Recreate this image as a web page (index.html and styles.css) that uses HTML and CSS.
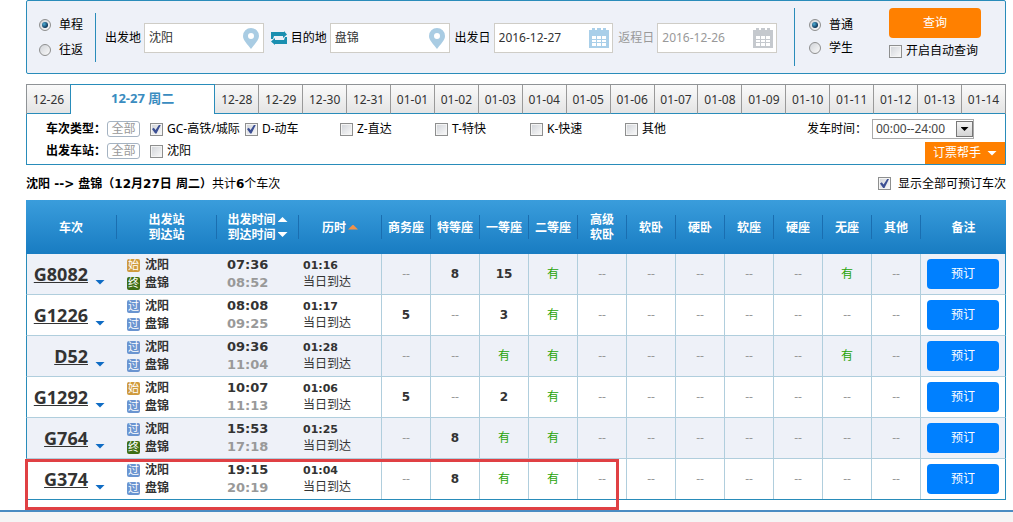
FILE: index.html
```html
<!DOCTYPE html>
<html lang="zh-CN">
<head>
  <meta charset="UTF-8" />
  <meta name="viewport" content="width=device-width, initial-scale=1" />
  <title>车票查询</title>
  <link rel="stylesheet" href="styles.css">
</head>
<body>

<svg width="0" height="0" class="sprite" aria-hidden="true">
  <symbol id="pin" viewBox="0 0 16 21">
    <path fill-rule="evenodd" d="M8 0a8 8 0 0 1 8 8c0 4.500-4.500 8-8 13C4.500 16 0 12.500 0 8a8 8 0 0 1 8-8zM8 5a3 3 0 1 0 0 6 3 3 0 0 0 0-6z"/>
  </symbol>
  <symbol id="calendar" viewBox="0 0 20 20">
    <path fill-rule="evenodd" d="M0 2h3V0h3v2h2V0h4v2h2V0h3v2h3v18H0zM3 8v3h4V8zm5 0v3h4V8zm5 0v3h4V8zM3 12v2h4v-2zm5 0v2h4v-2zm5 0v2h4v-2zM3 15v3h4v-3zm5 0v3h4v-3zm5 0v3h4v-3z"/>
  </symbol>
</svg>

<div class="page">
  <form class="search" onsubmit="return false">
    <div class="radios">
      <label><input type="radio" name="trip" checked />单程</label>
      <label><input type="radio" name="trip" />往返</label>
    </div>
    <div class="fields">
      <label for="from">出发地</label>
      <div class="box">
        <input type="text" id="from" value="沈阳" />
        <svg class="icon-pin"><use href="#pin"/></svg>
      </div>
      <button type="button" class="swap" aria-label="交换">
        <svg width="16" height="14" viewBox="0 0 16 14"><path d="M0 8V1h13V0l3 3.500L12 7V5H3l-1 3zM16 6v7H4v1L0 10.500 4 7v2h9l1-3z"/></svg>
      </button>
      <label for="to">目的地</label>
      <div class="box">
        <input type="text" id="to" value="盘锦" />
        <svg class="icon-pin"><use href="#pin"/></svg>
      </div>
      <label for="depart" class="date-label">出发日</label>
      <div class="box">
        <input type="text" id="depart" value="2016-12-27" />
        <svg class="icon-cal"><use href="#calendar"/></svg>
      </div>
      <label for="return" class="date-label off">返程日</label>
      <div class="box off">
        <input type="text" id="return" value="2016-12-26" />
        <svg class="icon-cal"><use href="#calendar"/></svg>
      </div>
    </div>
    <div class="radios person">
      <label><input type="radio" name="person" checked />普通</label>
      <label><input type="radio" name="person" />学生</label>
    </div>
    <div class="query">
      <button type="submit" class="btn-query">查询</button>
      <label><input type="checkbox" />开启自动查询</label>
    </div>
  </form>

  <nav class="dates">
    <a href="#">12-26</a>
    <a href="#" class="active">12-27 周二</a>
    <a href="#">12-28</a>
    <a href="#">12-29</a>
    <a href="#">12-30</a>
    <a href="#">12-31</a>
    <a href="#">01-01</a>
    <a href="#">01-02</a>
    <a href="#">01-03</a>
    <a href="#">01-04</a>
    <a href="#">01-05</a>
    <a href="#">01-06</a>
    <a href="#">01-07</a>
    <a href="#">01-08</a>
    <a href="#">01-09</a>
    <a href="#">01-10</a>
    <a href="#">01-11</a>
    <a href="#">01-12</a>
    <a href="#">01-13</a>
    <a href="#">01-14</a>
  </nav>

  <div class="filters">
    <div class="filter-rows">
      <div class="filter-row">
        <b>车次类型：</b>
        <button class="btn-all">全部</button>
        <label><input type="checkbox" checked />GC-高铁/城际</label>
        <label><input type="checkbox" checked />D-动车</label>
        <label><input type="checkbox" />Z-直达</label>
        <label><input type="checkbox" />T-特快</label>
        <label><input type="checkbox" />K-快速</label>
        <label><input type="checkbox" />其他</label>
      </div>
      <div class="filter-row">
        <b>出发车站：</b>
        <button class="btn-all">全部</button>
        <label><input type="checkbox" />沈阳</label>
      </div>
    </div>
    <div class="filter-side">
      <div class="time">
        <label for="time">发车时间：</label>
        <span class="select">
          <select id="time"><option>00:00--24:00</option></select>
          <span class="select-btn"><i class="tri down"></i></span>
        </span>
      </div>
      <button class="btn-help">订票帮手<i class="tri down"></i></button>
    </div>
  </div>

  <div class="summary">
    <p><b>沈阳 --&gt; 盘锦（12月27日 周二）</b>共计<b>6</b>个车次</p>
    <label><input type="checkbox" checked />显示全部可预订车次</label>
  </div>

  <div class="result">
    <table>
      <colgroup>
        <col class="c-train"><col class="c-station"><col class="c-time"><col class="c-span">
        <col span="11" class="c-seat"><col class="c-book">
      </colgroup>
      <thead>
        <tr>
          <th><span>车次</span></th>
          <th><span>出发站<br>到达站</span></th>
          <th><span><em>出发时间<i class="tri up"></i></em><em>到达时间<i class="tri down"></i></em></span></th>
          <th><span><em>历时<i class="tri up sorted"></i></em></span></th>
          <th><span>商务座</span></th>
          <th><span>特等座</span></th>
          <th><span>一等座</span></th>
          <th><span>二等座</span></th>
          <th><span>高级<br>软卧</span></th>
          <th><span>软卧</span></th>
          <th><span>硬卧</span></th>
          <th><span>软座</span></th>
          <th><span>硬座</span></th>
          <th><span>无座</span></th>
          <th><span>其他</span></th>
          <th><span>备注</span></th>
        </tr>
      </thead>
      <tbody>
        <tr>
          <td><div class="train"><a href="#">G8082</a><i class="tri down"></i></div></td>
          <td><div class="st"><s class="start">始</s>沈阳</div><div class="st"><s class="end">终</s>盘锦</div></td>
          <td class="clock"><b>07:36</b><b>08:52</b></td>
          <td class="span"><b>01:16</b><p>当日到达</p></td>
          <td>--</td><td><b>8</b></td><td><b>15</b></td><td class="yes">有</td><td>--</td><td>--</td><td>--</td><td>--</td><td>--</td><td class="yes">有</td><td>--</td>
          <td><button class="btn-book">预订</button></td>
        </tr>
        <tr>
          <td><div class="train"><a href="#">G1226</a><i class="tri down"></i></div></td>
          <td><div class="st"><s>过</s>沈阳</div><div class="st"><s>过</s>盘锦</div></td>
          <td class="clock"><b>08:08</b><b>09:25</b></td>
          <td class="span"><b>01:17</b><p>当日到达</p></td>
          <td><b>5</b></td><td>--</td><td><b>3</b></td><td class="yes">有</td><td>--</td><td>--</td><td>--</td><td>--</td><td>--</td><td>--</td><td>--</td>
          <td><button class="btn-book">预订</button></td>
        </tr>
        <tr>
          <td><div class="train"><a href="#">D52</a><i class="tri down"></i></div></td>
          <td><div class="st"><s>过</s>沈阳</div><div class="st"><s>过</s>盘锦</div></td>
          <td class="clock"><b>09:36</b><b>11:04</b></td>
          <td class="span"><b>01:28</b><p>当日到达</p></td>
          <td>--</td><td>--</td><td class="yes">有</td><td class="yes">有</td><td>--</td><td>--</td><td>--</td><td>--</td><td>--</td><td class="yes">有</td><td>--</td>
          <td><button class="btn-book">预订</button></td>
        </tr>
        <tr>
          <td><div class="train"><a href="#">G1292</a><i class="tri down"></i></div></td>
          <td><div class="st"><s class="start">始</s>沈阳</div><div class="st"><s>过</s>盘锦</div></td>
          <td class="clock"><b>10:07</b><b>11:13</b></td>
          <td class="span"><b>01:06</b><p>当日到达</p></td>
          <td><b>5</b></td><td>--</td><td><b>2</b></td><td class="yes">有</td><td>--</td><td>--</td><td>--</td><td>--</td><td>--</td><td>--</td><td>--</td>
          <td><button class="btn-book">预订</button></td>
        </tr>
        <tr>
          <td><div class="train"><a href="#">G764</a><i class="tri down"></i></div></td>
          <td><div class="st"><s>过</s>沈阳</div><div class="st"><s class="end">终</s>盘锦</div></td>
          <td class="clock"><b>15:53</b><b>17:18</b></td>
          <td class="span"><b>01:25</b><p>当日到达</p></td>
          <td>--</td><td><b>8</b></td><td class="yes">有</td><td class="yes">有</td><td>--</td><td>--</td><td>--</td><td>--</td><td>--</td><td>--</td><td>--</td>
          <td><button class="btn-book">预订</button></td>
        </tr>
        <tr>
          <td><div class="train"><a href="#">G374</a><i class="tri down"></i></div></td>
          <td><div class="st"><s>过</s>沈阳</div><div class="st"><s>过</s>盘锦</div></td>
          <td class="clock"><b>19:15</b><b>20:19</b></td>
          <td class="span"><b>01:04</b><p>当日到达</p></td>
          <td>--</td><td><b>8</b></td><td class="yes">有</td><td class="yes">有</td><td>--</td><td>--</td><td>--</td><td>--</td><td>--</td><td>--</td><td>--</td>
          <td><button class="btn-book">预订</button></td>
        </tr>
      </tbody>
    </table>
    <div class="mark"></div>
  </div>
</div>

<footer></footer>

</body>
</html>
```
FILE: styles.css
```css
* {
  box-sizing: border-box;
}

body {
  margin: 0;
  min-height: 100vh;
  display: flex;
  flex-direction: column;
  background: #fff;
  color: #000;
  font: 12px/18px "Noto Sans", "Noto Sans CJK SC", sans-serif;
}

.sprite {
  position: absolute;
}

input, select, button {
  font: inherit;
  color: inherit;
  margin: 0;
}

button {
  border: none;
  padding: 0;
  cursor: pointer;
}

label {
  white-space: nowrap;
}

p {
  margin: 0;
}

.page {
  padding: 0 7px 10px 26px;
}

/* radio, checkbox */
input[type="radio"], input[type="checkbox"] {
  appearance: none;
  flex: none;
  display: grid;
  place-items: center;
  width: 12px;
  height: 12px;
  border: 1px solid #8e8f8f;
  background: linear-gradient(135deg, #d0d3d8, #fafafa);
}

input[type="radio"] {
  border-radius: 50%;
}

input[type="radio"]:checked::before {
  content: "";
  width: 6px;
  height: 6px;
  border-radius: 50%;
  background: radial-gradient(circle at 35% 35%, #4fb0d8, #0b3155 70%);
}

input[type="checkbox"] {
  width: 13px;
  height: 13px;
  box-shadow: inset 0 0 0 1px #f4f4f4;
}

input[type="checkbox"]:checked::before {
  content: "";
  width: 9px;
  height: 9px;
  background: #3c4f93;
  clip-path: polygon(0 50%, 20% 35%, 40% 60%, 80% 0, 100% 0, 50% 100%, 35% 100%);
}

/* triangles */
.tri {
  display: inline-block;
  width: 10px;
  height: 5px;
  background: currentColor;
}

.tri.down {
  clip-path: polygon(0 0, 100% 0, 50% 100%);
}

.tri.up {
  clip-path: polygon(0 100%, 100% 100%, 50% 0);
}

/* search bar */
.search {
  display: flex;
  align-items: center;
  height: 74px;
  padding: 0 24px 0 12px;
  border: 1px solid #298cba;
  border-radius: 2px;
  background: #eef1f8;
}

.radios {
  flex: none;
  display: flex;
  flex-direction: column;
  gap: 7px;
  width: 57px;
  padding: 3px 0;
  border-right: 1px solid #298cba;
}

.radios label {
  display: flex;
  align-items: center;
  gap: 8px;
}

.radios.person {
  gap: 5px;
  width: 95px;
  padding: 8px 0 9px 14px;
  border-right: none;
  border-left: 1px solid #298cba;
}

.fields {
  flex: 1;
  display: flex;
  align-items: center;
  min-width: 0;
  padding: 2px 17px 0 9px;
}

.box {
  flex: 1;
  display: flex;
  align-items: center;
  min-width: 0;
  height: 30px;
  margin-left: 3px;
  padding: 0 3px 0 4px;
  border: 1px solid #cfcdc7;
  background: #fff;
  color: #333;
}

.box input {
  flex: 1;
  min-width: 0;
  padding: 0;
  border: none;
  outline: none;
  background: none;
}

.box svg {
  flex: none;
}

.icon-pin {
  width: 16px;
  height: 21px;
  margin-right: 1px;
  fill: #a9cce3;
}

.icon-cal {
  width: 20px;
  height: 20px;
  fill: #a9cfe9;
}

.swap {
  display: flex;
  margin: 0 4px 0 7px;
  background: none;
}

.swap svg {
  fill: #1a8fb0;
}

.date-label {
  margin-left: 5px;
}

.off {
  color: #999;
}

.off .icon-cal {
  fill: #c5c9ce;
}

.query {
  display: flex;
  flex-direction: column;
  gap: 4px;
  padding-bottom: 6px;
}

.query label {
  display: flex;
  align-items: center;
  gap: 4px;
}

.btn-query {
  width: 92px;
  height: 30px;
  border-radius: 4px;
  background: #ff8000;
  color: #fff;
}

/* date tabs */
.dates {
  display: flex;
  margin-top: 10px;
  border: 1px solid #8f9396;
  border-bottom: none;
}

.dates a {
  flex: 44 1 0;
  height: 29px;
  border-right: 1px solid #999;
  border-bottom: 1px solid #298cba;
  background: linear-gradient(#fafafa, #e4e4e4);
  color: #333;
  line-height: 29px;
  text-align: center;
  text-decoration: none;
}

.dates a:last-child {
  border-right: none;
}

.dates .active {
  flex-grow: 147;
  margin: -1px 0 0 -1px;
  height: 30px;
  border: 1px solid #298cba;
  border-bottom: none;
  background: #fff;
  color: #3a8cc0;
  font-size: 13px;
  font-weight: bold;
  line-height: 26px;
}

/* filters */
.filters {
  display: flex;
  justify-content: space-between;
  height: 51px;
  border: 1px solid #298cba;
  border-top: none;
}

.filter-rows {
  padding: 4px 0 0 19px;
}

.filter-row {
  display: flex;
  align-items: center;
  height: 22px;
}

.filter-row b {
  width: 61px;
}

.filter-row label {
  display: flex;
  align-items: center;
  gap: 4px;
  width: 95px;
}

.btn-all {
  width: 33px;
  height: 16px;
  margin-right: 10px;
  border: 1px solid #a5b3c2;
  border-radius: 3px;
  background: #fff;
  color: #999;
  line-height: 14px;
}

.filter-side {
  display: flex;
  flex-direction: column;
  align-items: flex-end;
  justify-content: space-between;
}

.time {
  display: flex;
  align-items: center;
  gap: 5px;
  padding: 5px 31px 0 0;
}

.select {
  position: relative;
}

.select select {
  appearance: none;
  display: block;
  width: 102px;
  height: 20px;
  padding: 0 20px 0 3px;
  border: 1px solid #aaa;
  border-radius: 0;
  background: #fff;
  color: #444;
}

.select-btn {
  position: absolute;
  top: 2px;
  right: 1px;
  display: grid;
  place-items: center;
  width: 17px;
  height: 16px;
  border: 1px solid #777;
  background: linear-gradient(#f4f4f4, #d4d4d4);
  pointer-events: none;
}

.select-btn .tri {
  width: 8px;
  height: 4px;
}

.btn-help {
  display: flex;
  align-items: center;
  justify-content: center;
  gap: 6px;
  width: 80px;
  height: 22px;
  background: #ff8000;
  color: #fff;
}

.summary {
  display: flex;
  align-items: center;
  justify-content: space-between;
  height: 35px;
  padding-top: 2px;
}

.summary b {
  font-family: "DejaVu Sans", "Noto Sans CJK SC", sans-serif;
}

.summary label {
  display: flex;
  align-items: center;
  gap: 7px;
}

/* train list */
.result {
  position: relative;
}

table {
  width: 100%;
  table-layout: fixed;
  border-spacing: 0;
  border-bottom: 1px solid #298cba;
}

.c-train { width: 91px; }
.c-station { width: 100px; }
.c-time { width: 82px; }
.c-span { width: 83px; }
.c-seat { width: 49px; }

th {
  height: 54px;
  padding: 0;
  background: linear-gradient(#3a9ddc, #187cc2);
  color: #fff;
  line-height: 15px;
}

th span {
  display: flex;
  flex-direction: column;
  justify-content: center;
  height: 24px;
  border-right: 1px solid #1a6eb0;
}

th:last-child span {
  border-right: none;
}

th em {
  font-style: normal;
  white-space: nowrap;
}

th .tri {
  margin: 0 0 2px 2px;
}

.sorted {
  color: #f0924a;
}

td {
  height: 41px;
  padding: 0;
  border-right: 1px solid #b0cedd;
  border-bottom: 1px solid #b0cedd;
  color: #999;
  text-align: center;
}

td:nth-child(-n+3) {
  border-right: none;
}

td:first-child {
  border-left: 1px solid #298cba;
}

td:last-child {
  border-right-color: #298cba;
}

tbody tr:last-child td {
  height: 40px;
  border-bottom: none;
}

tbody tr:nth-child(odd) {
  background: #eef1f8;
}

td b {
  color: #333;
  font: bold 12px/18px "DejaVu Sans", sans-serif;
}

.train {
  display: flex;
  align-items: center;
  justify-content: flex-end;
  gap: 7px;
  padding-right: 12px;
}

.train a {
  color: #333;
  font-size: 18px;
  font-weight: bold;
}

.train .tri {
  margin-top: 16px;
  color: #0f6cc4;
}

.st {
  display: flex;
  align-items: center;
  gap: 5px;
  padding-left: 10px;
  color: #333;
  font-weight: bold;
}

.st s {
  width: 13px;
  height: 13px;
  border-radius: 2px;
  background: #6a94d0;
  color: #fff;
  font-size: 11px;
  font-weight: normal;
  line-height: 12px;
  text-decoration: none;
}

.st .start {
  background: #cf9a3c;
}

.st .end {
  background: #3f6e14;
}

.clock b {
  display: block;
  padding-left: 10px;
  font-size: 13px;
  text-align: left;
}

.clock b + b {
  color: #999;
}

.span {
  padding-left: 4px;
  color: #333;
  line-height: 16px;
  text-align: left;
}

.span b {
  display: block;
  font-size: 11px;
  line-height: 16px;
}

.yes {
  color: #26a306;
}

.btn-book {
  width: 72px;
  height: 30px;
  border-radius: 4px;
  background: #0080ff;
  color: #fff;
  vertical-align: middle;
}

/* highlighted train */
.mark {
  position: absolute;
  left: -1px;
  bottom: -10px;
  width: 60.6%;
  height: 51px;
  border: 3px solid #e04044;
}

footer {
  flex: 1;
  border-top: 2px solid #4a8cc2;
  background: #f5f5f5;
}
```
